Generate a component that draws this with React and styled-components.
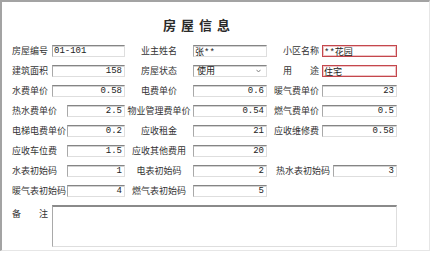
import React from 'react';
import styled, { createGlobalStyle } from 'styled-components';

const GlobalStyle = createGlobalStyle`
  html, body {
    margin: 0;
    padding: 0;
    background: #ffffff;
  }
  body {
    font-family: "Noto Sans CJK SC", "Liberation Sans", sans-serif;
    color: #333333;
  }
`;

const Panel = styled.div`
  box-sizing: border-box;
  width: 430px;
  height: 251px;
  padding: 16px 0 0 10px;
  border-top: 2px solid #a3a3a3;
  border-left: 2px solid #a3a3a3;
  border-right: 1px solid #e6e6e6;
  border-bottom: 1px solid #e6e6e6;
  background: #ffffff;
`;

const Title = styled.h1`
  margin: 0;
  padding-left: 151px;
  font-size: 13px;
  line-height: 14px;
  font-weight: 700;
  letter-spacing: 5px;
  color: #2a2a2a;
`;

const Form = styled.div`
  display: flex;
  flex-direction: column;
  gap: 8px;
  margin-top: 13px;
`;

const Row = styled.div`
  display: grid;
  grid-template-columns: 113px 142px 130px;
`;

const Field = styled.div`
  display: flex;
  align-items: ${p => (p.$top ? 'flex-start' : 'center')};
  height: ${p => p.$height || 12}px;
`;

const Label = styled.span`
  flex: none;
  box-sizing: border-box;
  width: ${p => p.$width}px;
  padding-right: ${p => p.$pad || 0}px;
  padding-top: ${p => p.$padTop || 0}px;
  text-align: ${p => p.$align || 'left'};
  font-size: 9px;
  line-height: 12px;
  white-space: nowrap;
  color: #333333;
`;

const sunken = `
  border-top: 1px solid #858585;
  border-left: 1px solid #a9a9a9;
  border-right: 1px solid #dedede;
  border-bottom: 1px solid #dedede;
  box-shadow: inset 0 1px 0 #d2d2d2;
`;

const Input = styled.input`
  flex: 1;
  min-width: 0;
  box-sizing: border-box;
  height: 12px;
  margin: 0;
  padding: 0 2px 0 1px;
  ${sunken}
  ${p =>
    p.$alert &&
    `
    border: 1px solid #c4474d;
    box-shadow: inset 0 0 0 1px #efc4c6;
  `}
  outline: none;
  background: #ffffff;
  font-family: "Liberation Mono", "Noto Sans CJK SC", monospace;
  font-size: 9px;
  line-height: 10px;
  color: #222222;
  text-align: ${p => (p.$num ? 'right' : 'left')};
`;

const SelectBox = styled.div`
  flex: 1;
  display: flex;
  align-items: center;
  justify-content: space-between;
  box-sizing: border-box;
  height: 12px;
  padding: 0 5px 0 3px;
  ${sunken}
  font-size: 9px;
  line-height: 10px;
  color: #222222;

  svg {
    flex: none;
  }
`;

const Memo = styled.textarea`
  box-sizing: border-box;
  width: 345px;
  height: 42px;
  margin: 0;
  padding: 2px;
  resize: none;
  outline: none;
  border-top: 2px solid #8a8a8a;
  border-left: 1px solid #a9a9a9;
  border-right: 1px solid #dedede;
  border-bottom: 1px solid #dedede;
  font-family: "Noto Sans CJK SC", sans-serif;
  font-size: 9px;
`;

const Chevron = () => (
  <svg width="5" height="4" viewBox="0 0 5 4">
    <path d="M0.5 0.8 L2.5 3 L4.5 0.8" fill="none" stroke="#777" strokeWidth="0.9" />
  </svg>
);

const col1Short = 40;
const col1Long = 55;

const rows = [
  [
    { label: '房屋编号', value: '01-101', w: col1Short },
    { label: '业主姓名', value: '张**' },
    { label: '小区名称', value: '**花园', alert: true },
  ],
  [
    { label: '建筑面积', value: '158', num: true, w: col1Short },
    { label: '房屋状态', select: '使用' },
    { label: '用　　途', value: '住宅', alert: true },
  ],
  [
    { label: '水费单价', value: '0.58', num: true, w: col1Short },
    { label: '电费单价', value: '0.6', num: true },
    { label: '暖气费单价', value: '23', num: true },
  ],
  [
    { label: '热水费单价', value: '2.5', num: true, w: col1Long },
    { label: '物业管理费单价', value: '0.54', num: true },
    { label: '燃气费单价', value: '0.5', num: true },
  ],
  [
    { label: '电梯电费单价', value: '0.2', num: true, w: col1Long },
    { label: '应收租金', value: '21', num: true },
    { label: '应收维修费', value: '0.58', num: true },
  ],
  [
    { label: '应收车位费', value: '1.5', num: true, w: col1Long },
    { label: '应收其他费用', value: '20', num: true },
    null,
  ],
  [
    { label: '水表初始码', value: '1', num: true, w: col1Long },
    { label: '电表初始码', value: '2', num: true },
    { label: '热水表初始码', value: '3', num: true, w: 66 },
  ],
  [
    { label: '暖气表初始码', value: '4', num: true, w: col1Long },
    { label: '燃气表初始码', value: '5', num: true },
    null,
  ],
];

const labelProps = [
  f => ({ $width: f.w, $align: 'left' }),
  () => ({ $width: 68, $align: 'center' }),
  f => ({ $width: f.w || 55, $align: 'right', $pad: 3 }),
];

const FormField = ({ field, col }) => {
  if (!field) return <Field />;
  return (
    <Field>
      <Label {...labelProps[col](field)}>{field.label}</Label>
      {field.select ? (
        <SelectBox>
          <span>{field.select}</span>
          <Chevron />
        </SelectBox>
      ) : (
        <Input
          readOnly
          defaultValue={field.value}
          $num={field.num}
          $alert={field.alert}
        />
      )}
    </Field>
  );
};

export default function App() {
  return (
    <>
      <GlobalStyle />
      <Panel>
        <Title>房屋信息</Title>
        <Form>
          {rows.map((row, i) => (
            <Row key={i}>
              {row.map((field, c) => (
                <FormField key={c} field={field} col={c} />
              ))}
            </Row>
          ))}
          <Field $top $height={42}>
            <Label $width={40} $padTop={3}>
              备　　注
            </Label>
            <Memo readOnly defaultValue="" />
          </Field>
        </Form>
      </Panel>
    </>
  );
}
